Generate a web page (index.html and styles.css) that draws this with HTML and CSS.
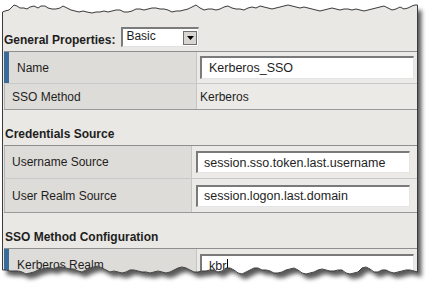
FILE: index.html
```html
<!DOCTYPE html>
<html lang="en">
<head>
    <meta charset="UTF-8">
    <meta name="viewport" content="width=device-width, initial-scale=1.0">
    <title>SSO Configuration</title>
    <link rel="stylesheet" href="styles.css">
</head>
<body>
    <div class="sheet">
        <!-- torn paper outline, shared by backdrop, clip and edge -->
        <svg class="backdrop" width="434" height="296">
            <defs>
                <path id="torn" d="M2.5 12 L5 11 L9 10 L12 7 L14 5 L17 6 L20 8 L24 8 L27 9 L30 7 L34 6 L38 8 L41 6 L45 6 L48 8 L52 9 L56 9 L60 8 L63 6 L67 8 L71 10 L75 11 L79 12 L83 11 L87 12 L92 13 L96 12 L100 12 L104 11 L108 12 L112 11 L116 10 L120 10 L124 12 L128 12 L132 11 L136 9 L140 9 L144 10 L148 9 L152 8 L156 8 L160 9 L164 9 L168 10 L172 12 L176 11 L180 11 L184 10 L188 9 L192 7 L196 5 L200 8 L204 10 L208 9 L212 9 L216 10 L220 9 L224 7 L228 6 L232 8 L236 9 L240 9 L244 10 L248 8 L252 7 L256 8 L260 6 L264 7 L268 8 L272 9 L276 8 L280 7 L284 6 L288 5 L292 6 L296 7 L300 8 L304 7 L308 8 L312 9 L316 10 L320 11 L324 10 L328 9 L332 8 L336 9 L340 10 L344 9 L348 9 L352 10 L356 9 L360 10 L364 11 L368 10 L372 9 L376 8 L380 7 L384 6 L388 8 L392 10 L396 9 L400 7 L404 9 L408 8 L412 6 L415 5 L417.5 5 L417.5 272 L414 271 L410 270 L406 270 L402 271 L398 272 L394 273 L390 272 L386 270 L382 270 L378 272 L374 272 L370 269 L366 267 L362 268 L358 272 L354 273 L350 274 L346 273 L342 270 L338 270 L334 271 L330 271 L326 270 L322 269 L318 270 L314 272 L310 273 L306 274 L302 273 L298 270 L294 268 L290 269 L286 270 L282 272 L278 273 L274 273 L270 271 L266 270 L262 270 L258 268 L254 268 L250 270 L246 272 L242 274 L238 273 L234 270 L230 268 L226 268 L222 271 L218 272 L214 270 L210 270 L206 271 L202 271 L198 272 L194 272 L190 270 L186 268 L182 267 L178 268 L174 270 L170 272 L166 273 L162 272 L158 271 L154 272 L150 273 L146 272 L142 272 L138 271 L134 270 L130 270 L126 272 L122 273 L118 272 L114 271 L110 272 L106 270 L102 268 L98 266 L94 267 L90 268 L86 270 L82 272 L78 271 L74 269 L70 269 L66 268 L62 267 L58 267 L54 269 L50 268 L46 268 L42 269 L38 270 L34 272 L30 273 L26 274 L22 272 L18 271 L14 271 L10 271 L6 270 L2.5 270 Z"/>
                <clipPath id="tear"><use href="#torn"/></clipPath>
                <filter id="shadow" x="-5%" y="-5%" width="115%" height="120%">
                    <feDropShadow dx="4" dy="5" stdDeviation="2" flood-color="#000" flood-opacity="0.65"/>
                </filter>
            </defs>
            <use href="#torn" class="paper"/>
        </svg>

        <div class="panel">
            <div class="general">
                <span class="group-title">General Properties:</span>
                <div class="select">
                    <span>Basic</span>
                    <span class="drop">
                        <svg width="7" height="4" viewBox="0 0 7 4"><path d="M0 0H7L3.5 4Z" fill="#000"/></svg>
                    </span>
                </div>
            </div>

            <div class="props">
                <div class="row tall current">
                    <div class="label">Name</div>
                    <div class="value"><div class="field">Kerberos_SSO</div></div>
                </div>
                <div class="row">
                    <div class="label">SSO Method</div>
                    <div class="value">Kerberos</div>
                </div>
            </div>

            <h3 class="section">Credentials Source</h3>
            <div class="props narrow">
                <div class="row tall">
                    <div class="label">Username Source</div>
                    <div class="value"><div class="field">session.sso.token.last.username</div></div>
                </div>
                <div class="row taller">
                    <div class="label">User Realm Source</div>
                    <div class="value"><div class="field">session.logon.last.domain</div></div>
                </div>
            </div>

            <h3 class="section">SSO Method Configuration</h3>
            <div class="props">
                <div class="row tall current top-field">
                    <div class="label">Kerberos Realm</div>
                    <div class="value"><div class="field">kbr<span class="caret"></span></div></div>
                </div>
            </div>
        </div>

        <svg class="edge" width="434" height="296"><use href="#torn"/></svg>
    </div>
</body>
</html>
```

FILE: styles.css
```css
body {
    margin: 0;
    background: #fff;
    font-family: "Liberation Sans", Arial, sans-serif;
    font-size: 12px;
    color: #1e1e1e;
}

.sheet {
    position: relative;
    width: 434px;
    height: 296px;
    overflow: hidden;
}

.backdrop, .edge {
    position: absolute;
    left: 0;
    top: 0;
}
.edge {
    pointer-events: none;
}
.paper {
    fill: #e9e8e4;
    filter: url(#shadow);
}
.edge use {
    fill: none;
    stroke: #3a3a3a;
    stroke-width: 1;
}

.panel {
    position: relative;
    height: 296px;
    box-sizing: border-box;
    padding: 27px 17px 0 4px;
    clip-path: url(#tear);
}

/* header with the view selector */
.general {
    display: flex;
    align-items: flex-end;
    gap: 6px;
    height: 20px;
    margin-bottom: 4px;
}
.group-title {
    font-weight: bold;
    line-height: 14px;
}
.select {
    display: flex;
    align-items: flex-start;
    width: 78px;
    height: 20px;
    box-sizing: border-box;
    border-style: solid;
    border-width: 2px 1px 1px 2px;
    border-color: #7b7b7b #e2e2e2 #e2e2e2 #7b7b7b;
    background: #fff;
    padding-left: 3px;
    line-height: 14px;
}
.drop {
    margin: 2px 1px 0 auto;
    width: 14px;
    height: 14px;
    box-sizing: border-box;
    border: 1px solid #6f6f6f;
    background: #d9d6d1;
    display: flex;
    align-items: center;
    justify-content: center;
}

/* property tables */
.props {
    border-top: 1px solid #8e8e8e;
    border-bottom: 1px solid #999;
}
.row {
    display: grid;
    grid-template-columns: 193px 1fr;
    height: 25px;
}
.row + .row {
    border-top: 1px solid #c9c9c9;
}
.row.tall {
    height: 31px;
}
.narrow .row {
    grid-template-columns: 188px 1fr;
    height: 32px;
}
.narrow .row.taller {
    height: 33px;
}
.label {
    display: flex;
    align-items: center;
    background: #dedcd8;
    border-left: 1px solid #b4b4b4;
    border-right: 1px solid #c6c6c6;
    padding-left: 7px;
}
.current .label {
    border-left: 5px solid #3b6b9b;
    padding-left: 8px;
}
.value {
    display: flex;
    align-items: center;
    padding: 0 3px;
    background: #ebeae6;
}
.narrow .value {
    padding: 0 7px 0 4px;
}
.top-field .value {
    align-items: flex-start;
    padding-top: 5px;
}
.field {
    flex: 1;
    height: 23px;
    box-sizing: border-box;
    border-style: solid;
    border-width: 2px 1px 1px 2px;
    border-color: #7a7a7a #e4e4e4 #e4e4e4 #7a7a7a;
    background: #fff;
    padding-left: 7px;
    font-size: 12.5px;
    line-height: 20px;
    display: flex;
    align-items: center;
}
.narrow .field {
    height: 22px;
    padding-left: 6px;
}
.caret {
    display: inline-block;
    width: 1px;
    height: 15px;
    background: #000;
    margin-left: 1px;
}

.section {
    margin: 0;
    height: 35px;
    box-sizing: border-box;
    padding: 16px 0 0 1px;
    font-size: 12px;
    line-height: 16px;
    font-weight: bold;
}
```
